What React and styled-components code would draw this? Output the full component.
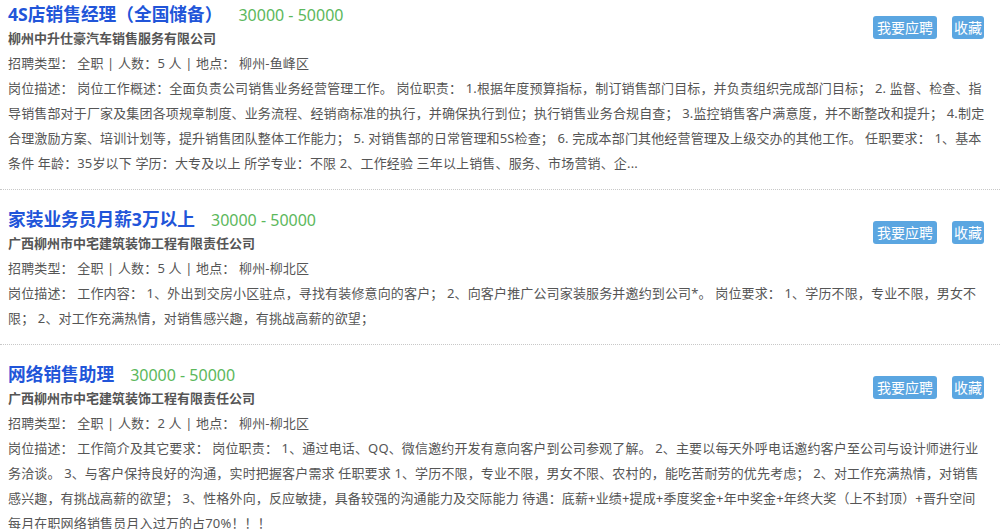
import React from "react"
import styled, { createGlobalStyle } from "styled-components"

const jobs = [
  {
    title: "4S店销售经理（全国储备）",
    salary: "30000 - 50000",
    company: "柳州中升仕豪汽车销售服务有限公司",
    count: 5,
    place: "柳州-鱼峰区",
    desc:
      "岗位工作概述：全面负责公司销售业务经营管理工作。 岗位职责： 1.根据年度预算指标，制订销售部门目标，并负责组织完成部门目标； 2. 监督、检查、指导销售部对于厂家及集团各项规章制度、业务流程、经销商标准的执行，并确保执行到位；执行销售业务合规自查； 3.监控销售客户满意度，并不断整改和提升； 4.制定合理激励方案、培训计划等，提升销售团队整体工作能力； 5. 对销售部的日常管理和5S检查； 6. 完成本部门其他经营管理及上级交办的其他工作。 任职要求： 1、基本条件 年龄：35岁以下 学历：大专及以上 所学专业：不限 2、工作经验 三年以上销售、服务、市场营销、企...",
  },
  {
    title: "家装业务员月薪3万以上",
    salary: "30000 - 50000",
    company: "广西柳州市中宅建筑装饰工程有限责任公司",
    count: 5,
    place: "柳州-柳北区",
    desc:
      "工作内容： 1、外出到交房小区驻点，寻找有装修意向的客户； 2、向客户推广公司家装服务并邀约到公司*。 岗位要求： 1、学历不限，专业不限，男女不限； 2、对工作充满热情，对销售感兴趣，有挑战高薪的欲望；",
  },
  {
    title: "网络销售助理",
    salary: "30000 - 50000",
    company: "广西柳州市中宅建筑装饰工程有限责任公司",
    count: 2,
    place: "柳州-柳北区",
    desc:
      "工作简介及其它要求： 岗位职责： 1、通过电话、QQ、微信邀约开发有意向客户到公司参观了解。 2、主要以每天外呼电话邀约客户至公司与设计师进行业务洽谈。 3、与客户保持良好的沟通，实时把握客户需求 任职要求 1、学历不限，专业不限，男女不限、农村的，能吃苦耐劳的优先考虑； 2、对工作充满热情，对销售感兴趣，有挑战高薪的欲望； 3、性格外向，反应敏捷，具备较强的沟通能力及交际能力 待遇：底薪+业绩+提成+季度奖金+年中奖金+年终大奖（上不封顶）+晋升空间 每月在职网络销售员月入过万的占70%！！！",
  },
]

const App = () => (
  <>
    <GlobalStyle />
    <List>
      {jobs.map(job => (
        <Item key={job.title}>
          <Actions>
            <Button $pad={4}>我要应聘</Button>
            <Button $pad={2}>收藏</Button>
          </Actions>
          <TitleRow>
            <Title>{job.title}</Title>
            <Salary>{job.salary}</Salary>
          </TitleRow>
          <Company>{job.company}</Company>
          <Line>{`招聘类型： 全职 | 人数：${job.count} 人 | 地点： ${job.place}`}</Line>
          <Line>{`岗位描述： ${job.desc}`}</Line>
        </Item>
      ))}
    </List>
  </>
)

const GlobalStyle = createGlobalStyle`
  body {
    margin: 0;
    background: #fff;
    font-family: "Noto Sans", "Noto Sans CJK SC", sans-serif;
    color: #555;
  }
`

const List = styled.div`
  width: 1000px;
`

const Item = styled.div`
  padding: 18px 12px 13px 8px;
  border-bottom: 1px dotted #c8c8c8;

  &:first-child {
    padding-top: 3px;
  }
`

const Actions = styled.div`
  float: right;
  display: flex;
  gap: 15px;
  margin: 13px 4px 0 0;
`

const Button = styled.button`
  height: 23px;
  padding: 0 ${p => p.$pad}px;
  border: none;
  border-radius: 3px;
  background: #5ba6e1;
  color: #fff;
  font-family: inherit;
  font-size: 14px;
  line-height: 23px;
  cursor: pointer;
`

const TitleRow = styled.div`
  display: flex;
  align-items: baseline;
  gap: 16px;
  height: 23px;
  line-height: 23px;
`

const Title = styled.span`
  font-size: 17.7px;
  font-weight: 700;
  color: #2155d9;
`

const Salary = styled.span`
  font-size: 16px;
  color: #5cb85c;
`

const Company = styled.div`
  font-size: 13px;
  font-weight: 700;
  line-height: 25px;
  color: #555;
`

const Line = styled.div`
  font-size: 13px;
  line-height: 25px;
  letter-spacing: 0.15px;
  color: #555;
`

export default App
